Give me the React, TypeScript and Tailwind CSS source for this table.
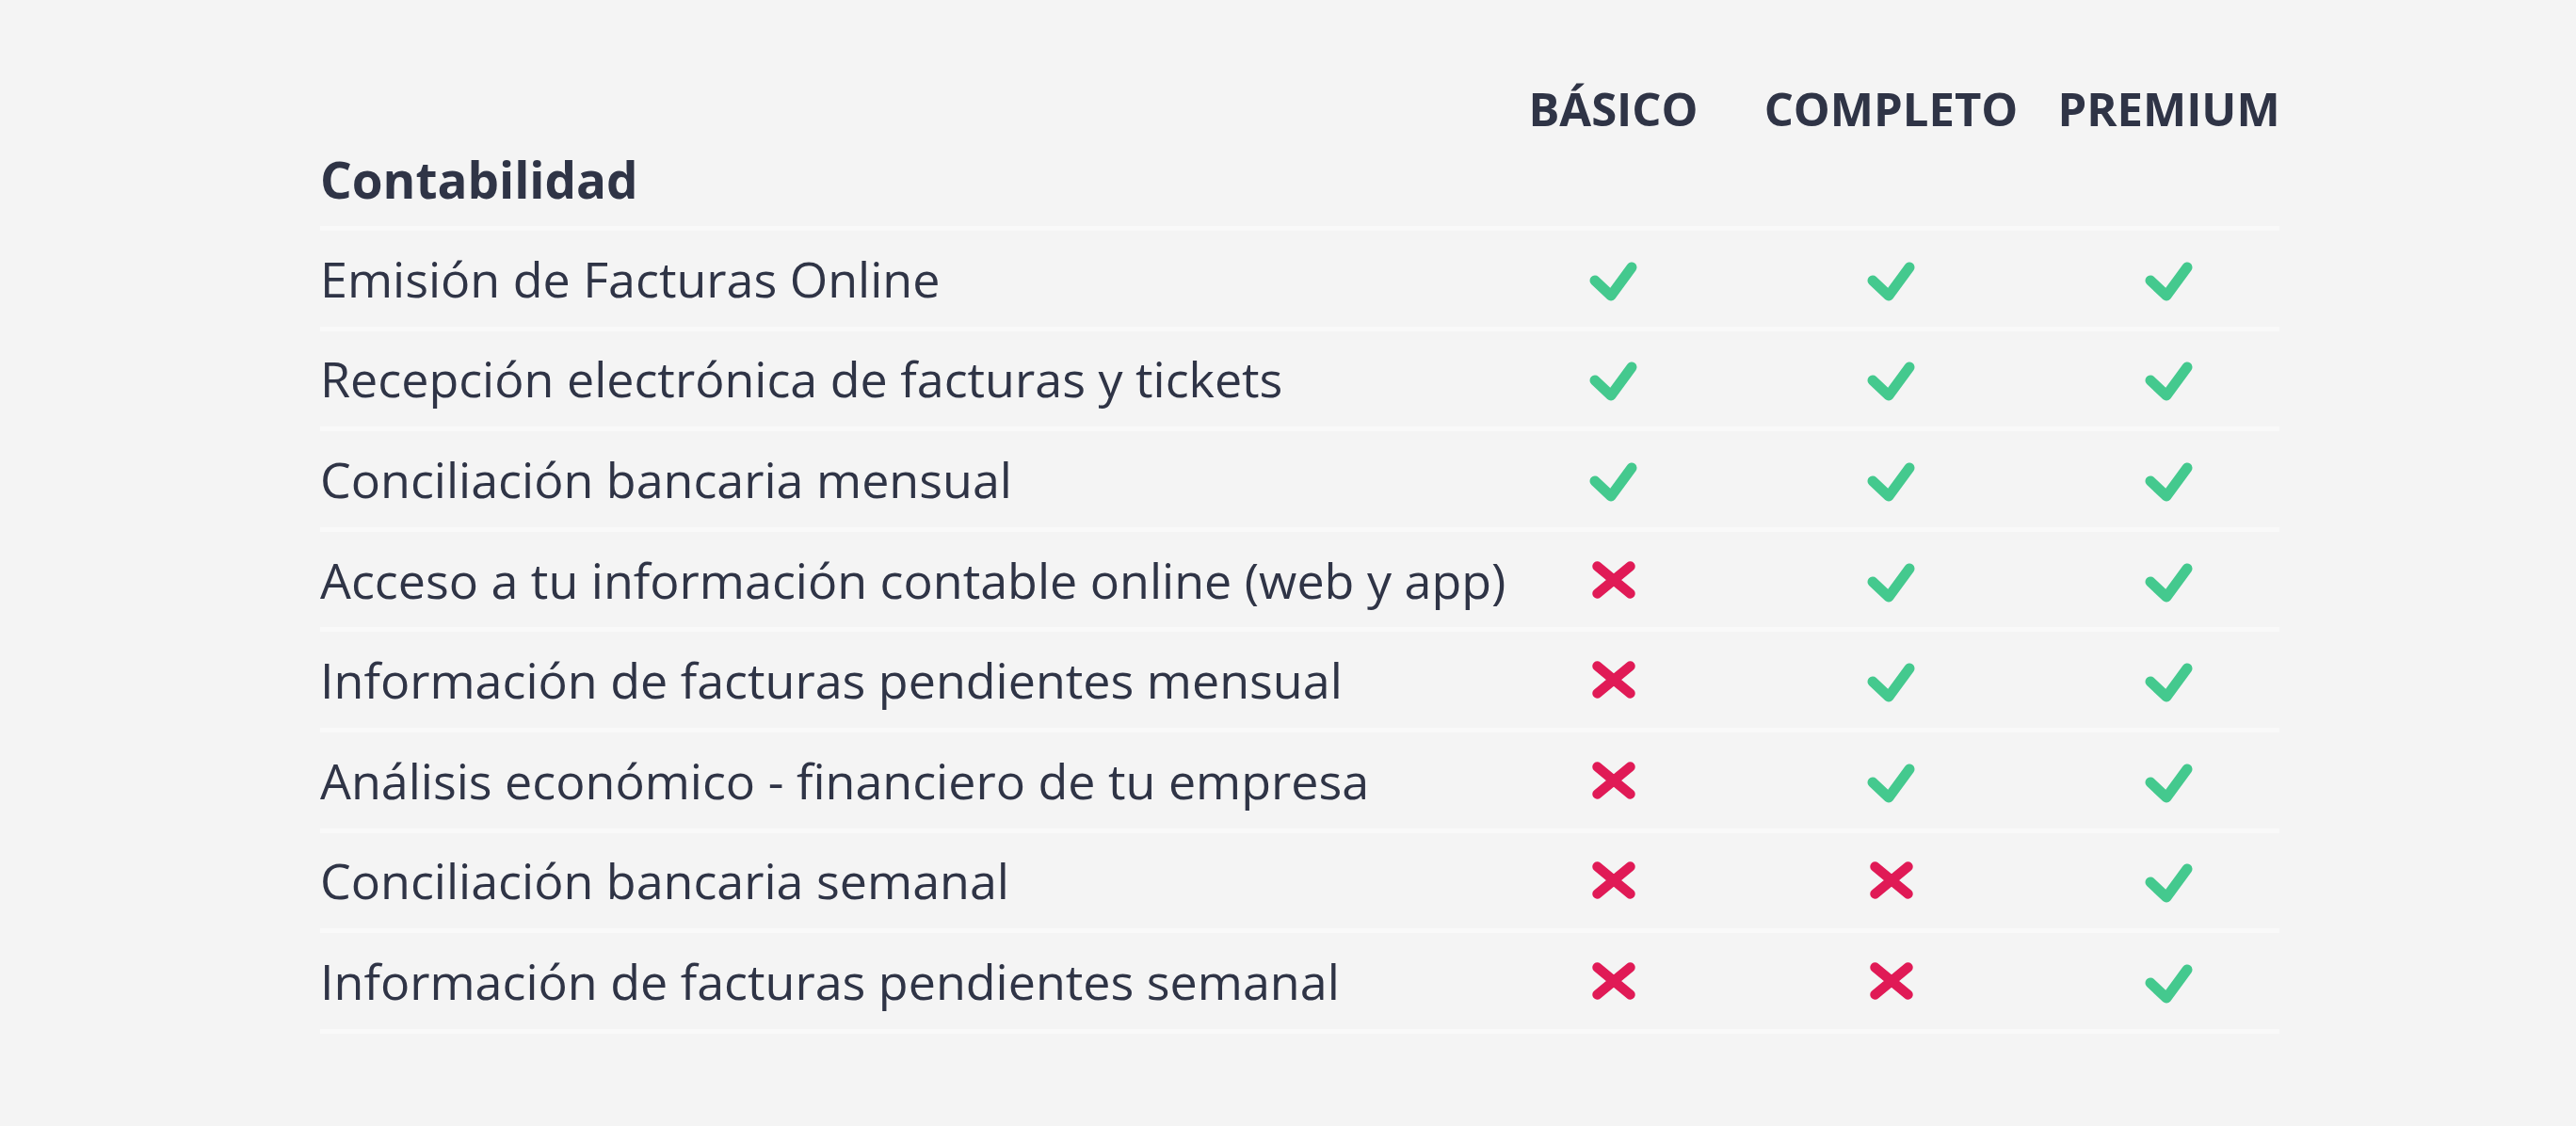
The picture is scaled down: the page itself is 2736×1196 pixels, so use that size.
const PLANS = ['BÁSICO', 'COMPLETO', 'PREMIUM'];

// true = incluido en el plan
const FEATURES: { label: string; plans: boolean[] }[] = [
  { label: 'Emisión de Facturas Online', plans: [true, true, true] },
  { label: 'Recepción electrónica de facturas y tickets', plans: [true, true, true] },
  { label: 'Conciliación bancaria mensual', plans: [true, true, true] },
  { label: 'Acceso a tu información contable online (web y app)', plans: [false, true, true] },
  { label: 'Información de facturas pendientes mensual', plans: [false, true, true] },
  { label: 'Análisis económico - financiero de tu empresa', plans: [false, true, true] },
  { label: 'Conciliación bancaria semanal', plans: [false, false, true] },
  { label: 'Información de facturas pendientes semanal', plans: [false, false, true] },
];

function Check() {
  return (
    <svg width="60" height="48" viewBox="0 0 60 48" className="mt-[6px]">
      <path d="M10 23 L27 39 L49 9" fill="none" stroke="#44c98e" strokeWidth="11" strokeLinecap="round" strokeLinejoin="round" />
    </svg>
  );
}

function Cross() {
  return (
    <svg width="50" height="44" viewBox="0 0 50 44">
      <path d="M7.5 7.5 L42.5 36.5 M42.5 7.5 L7.5 36.5" fill="none" stroke="#e01a56" strokeWidth="10.5" strokeLinecap="round" />
    </svg>
  );
}

function Separator() {
  return <div className="w-[2081px] h-[5px] bg-[#f9f9f9]" />;
}

export default function App() {
  return (
    <div
      className="min-h-[1196px] w-full bg-[#f4f4f4] text-[#2f3446] pt-[91px] pl-[340px]"
      style={{ fontFamily: '"Open Sans", "Noto Sans", sans-serif' }}
    >
      <div className="grid grid-cols-[1226px_295px_295px_295px] h-[149px]">
        <h2 className="self-end pb-[23px] text-[53px] font-bold leading-none">Contabilidad</h2>
        {PLANS.map(p => (
          <div key={p} className="self-start text-center text-[49px] font-bold leading-none whitespace-nowrap">
            {p}
          </div>
        ))}
      </div>
      <Separator />
      {FEATURES.map(f => (
        <div key={f.label}>
          <div className="grid grid-cols-[1226px_295px_295px_295px] h-[101.6px] items-center">
            <div className="text-[52px] leading-normal whitespace-nowrap">{f.label}</div>
            {f.plans.map((ok, i) => (
              <div key={i} className="flex justify-center">
                {ok ? <Check /> : <Cross />}
              </div>
            ))}
          </div>
          <Separator />
        </div>
      ))}
    </div>
  );
}
